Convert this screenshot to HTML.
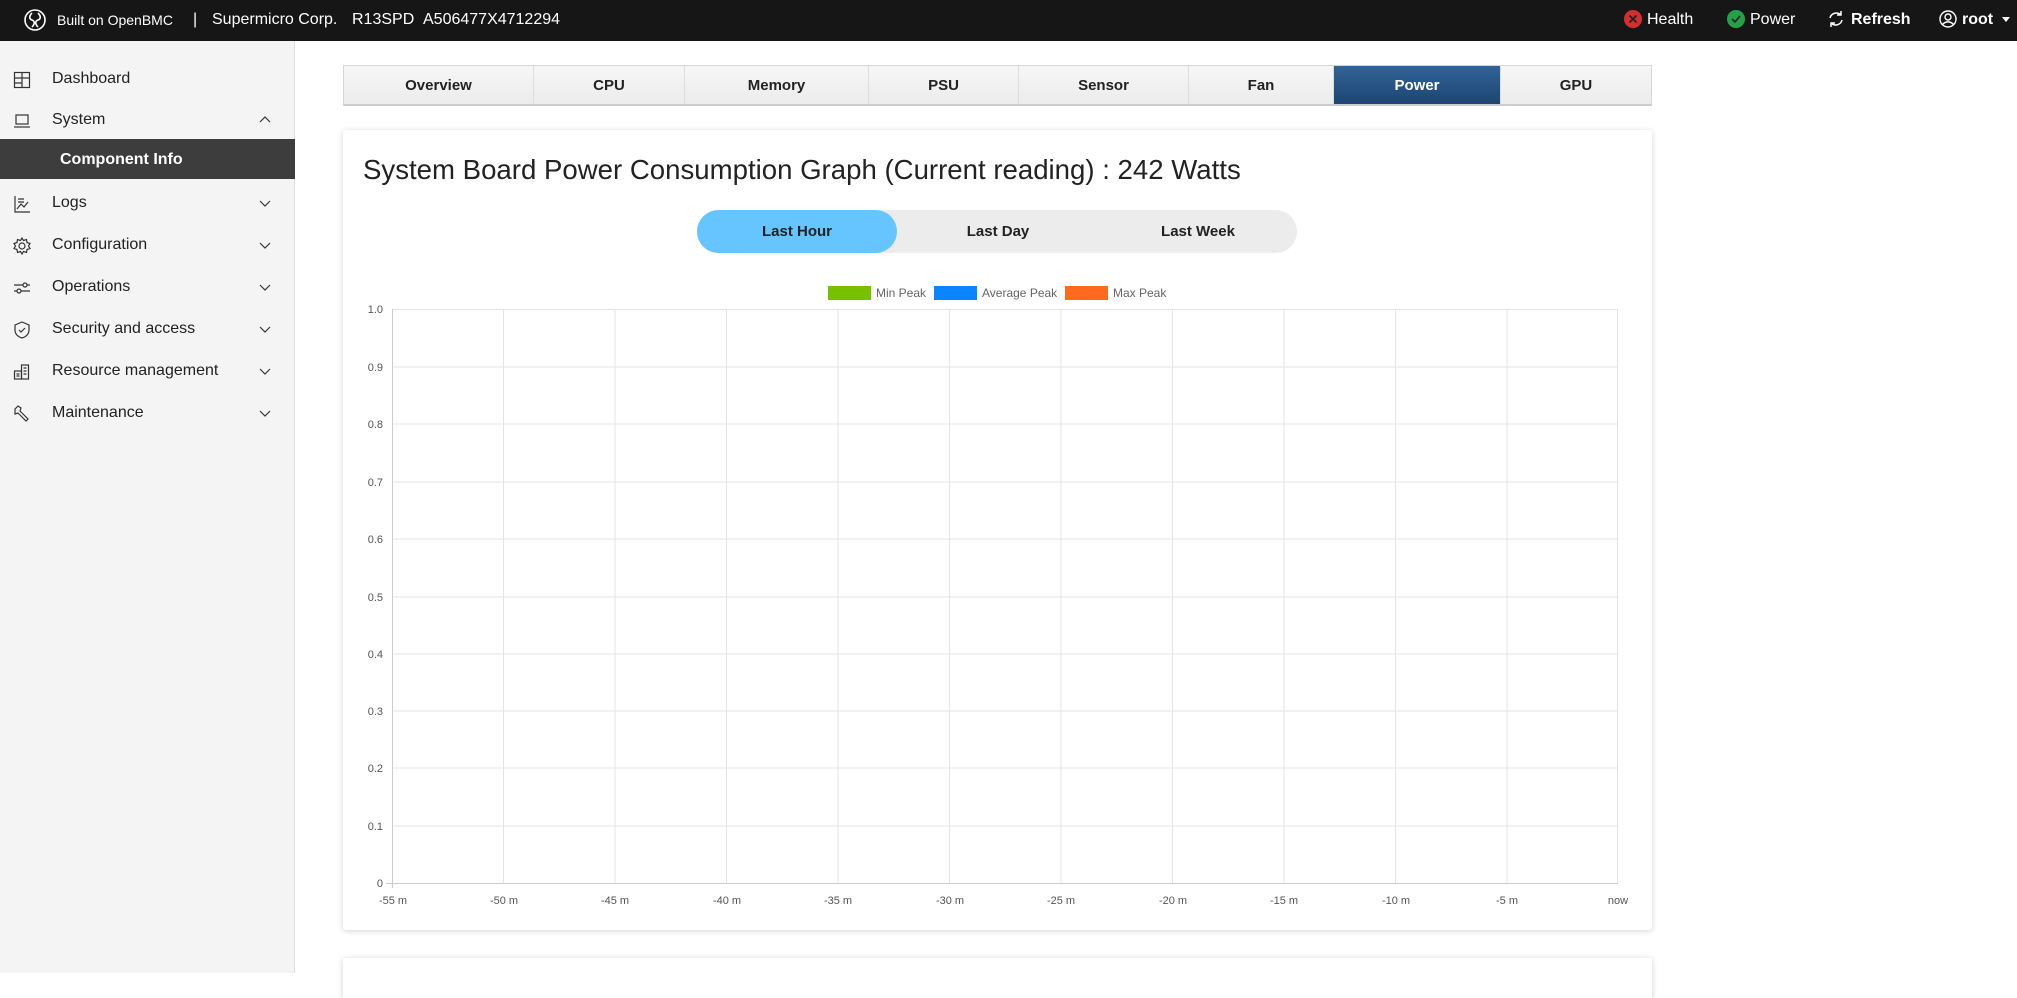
<!DOCTYPE html>
<html><head><meta charset="utf-8"><style>
*{box-sizing:border-box;margin:0;padding:0}
body{width:2017px;height:973px;overflow:hidden;font-family:"Liberation Sans",sans-serif;background:#fff;position:relative;color:#222}
.hdr{position:absolute;left:0;top:0;width:2017px;height:41px;background:#161616;color:#fff}
.hdr span{position:absolute;top:11px;font-size:16px;white-space:nowrap}
.side{position:absolute;left:0;top:41px;width:295px;height:932px;background:#f4f4f4;border-right:1px solid #ddd}
.nav{position:absolute;left:0;width:295px;height:40px;font-size:16px;color:#222}
.nav .t{position:absolute;left:52px;top:10px}
.nav svg.i{position:absolute;left:13px;top:11px}
.nav .c{position:absolute;left:258px;top:12px}
.tabs{position:absolute;left:343px;top:65px;height:41px;width:1309px;display:flex;border:1px solid #d6d6d6;border-bottom:2px solid #ccc}
.tabs div{height:100%;background:linear-gradient(#f6f6f6,#ececec);border-right:1px solid #ddd;font-weight:bold;font-size:15px;display:flex;align-items:center;justify-content:center}
.card{position:absolute;left:343px;top:130px;width:1309px;height:800px;background:#fff;box-shadow:0 1px 6px rgba(0,0,0,.18);border-radius:3px}
</style></head><body>
<div class="hdr">
<svg style="position:absolute;left:23px;top:8px" width="24" height="24" viewBox="0 0 24 24" fill="none" stroke="#fff" stroke-width="1.6"><circle cx="12" cy="12" r="10"/><path d="M9 5c-3 3-3 6 0 7s3 4 0 7M15 5c3 3 3 6 0 7s-3 4 0 7"/></svg>
<span style="left:57px;font-size:14px;top:12px">Built on OpenBMC</span>
<span style="left:193px">|</span>
<span style="left:212px">Supermicro Corp.</span>
<span style="left:352px">R13SPD</span>
<span style="left:423px">A506477X4712294</span>
<svg style="position:absolute;left:1624px;top:10px" width="18" height="18"><circle cx="9" cy="9" r="9" fill="#d32f2f"/><path d="M5.5 5.5l7 7M12.5 5.5l-7 7" stroke="#222" stroke-width="1.8"/></svg>
<span style="left:1647px">Health</span>
<svg style="position:absolute;left:1727px;top:10px" width="18" height="18"><circle cx="9" cy="9" r="9" fill="#24a148"/><path d="M5 9l3 3 5-6" stroke="#222" stroke-width="1.6" fill="none"/></svg>
<span style="left:1750px">Power</span>
<svg style="position:absolute;left:1827px;top:10px" width="18" height="18" fill="none" stroke="#fff" stroke-width="1.5"><path d="M3 8a6.5 6.5 0 0 1 11-3M15 10a6.5 6.5 0 0 1-11 3M14 1v4h-4M4 17v-4h4"/></svg>
<span style="left:1851px;font-weight:bold">Refresh</span>
<svg style="position:absolute;left:1939px;top:10px" width="18" height="18" fill="none" stroke="#fff" stroke-width="1.4"><circle cx="9" cy="9" r="8"/><circle cx="9" cy="7" r="3"/><path d="M3.5 14.5c3-3.5 8-3.5 11 0"/></svg>
<span style="left:1962px;font-weight:bold">root</span>
<svg style="position:absolute;left:2002px;top:17px" width="8" height="5"><path d="M0 0h8L4 5z" fill="#fff"/></svg>
</div>
<div class="side">
<div class="nav" style="top:19px"><svg class="i" width="18" height="18" fill="none" stroke="#333" stroke-width="1.2"><rect x="1.5" y="1.5" width="15" height="15"/><path d="M1.5 7h15M9 1.5v5.5M1.5 12h7M9 7v9.5"/></svg><span class="t">Dashboard</span></div>
<div class="nav" style="top:60px"><svg class="i" width="18" height="18" fill="none" stroke="#333" stroke-width="1.2"><rect x="3" y="3" width="12" height="9"/><path d="M1 15h16"/></svg><span class="t">System</span><svg class="c" width="14" height="14" fill="none" stroke="#333" stroke-width="1.2"><path d="M2 9l5-5 5 5"/></svg></div>
<div style="position:absolute;left:0;top:98px;width:295px;height:40px;background:#3d3d3d;color:#fff;font-weight:bold;font-size:16px;padding:12px 0 0 60px">Component Info</div>
<div class="nav" style="top:143px"><svg class="i" width="18" height="18" fill="none" stroke="#333" stroke-width="1.2"><path d="M2 1v16h15M5 4h6M5 7h6M4 14l4-5 3 3 4-5"/></svg><span class="t">Logs</span><svg class="c" width="14" height="14" fill="none" stroke="#333" stroke-width="1.2"><path d="M2 5l5 5 5-5"/></svg></div>
<div class="nav" style="top:185px"><svg class="i" width="18" height="18" fill="none" stroke="#333" stroke-width="1.2"><circle cx="9" cy="9" r="3"/><path d="M9 1l1.5 2.5 3-1 .5 3 3 1-1.5 2.5 1.5 2.5-3 1-.5 3-3-1L9 17l-1.5-2.5-3 1-.5-3-3-1L2.5 9 1 6.5l3-1 .5-3 3 1z"/></svg><span class="t">Configuration</span><svg class="c" width="14" height="14" fill="none" stroke="#333" stroke-width="1.2"><path d="M2 5l5 5 5-5"/></svg></div>
<div class="nav" style="top:227px"><svg class="i" width="18" height="18" fill="none" stroke="#333" stroke-width="1.2"><path d="M1 6h9M14 6h3M1 12h3M8 12h9"/><circle cx="12" cy="6" r="2"/><circle cx="6" cy="12" r="2"/></svg><span class="t">Operations</span><svg class="c" width="14" height="14" fill="none" stroke="#333" stroke-width="1.2"><path d="M2 5l5 5 5-5"/></svg></div>
<div class="nav" style="top:269px"><svg class="i" width="18" height="18" fill="none" stroke="#333" stroke-width="1.2"><path d="M9 1l7 3v5c0 4-3 7-7 8-4-1-7-4-7-8V4z"/><path d="M6 9l2 2 4-4"/></svg><span class="t">Security and access</span><svg class="c" width="14" height="14" fill="none" stroke="#333" stroke-width="1.2"><path d="M2 5l5 5 5-5"/></svg></div>
<div class="nav" style="top:311px"><svg class="i" width="18" height="18" fill="none" stroke="#333" stroke-width="1.2"><rect x="1.5" y="8" width="7" height="8"/><rect x="8.5" y="2" width="7" height="14"/><path d="M3.5 11h3M3.5 13h3M10.5 5h3M10.5 8h3M10.5 11h3"/></svg><span class="t">Resource management</span><svg class="c" width="14" height="14" fill="none" stroke="#333" stroke-width="1.2"><path d="M2 5l5 5 5-5"/></svg></div>
<div class="nav" style="top:353px"><svg class="i" width="18" height="18" fill="none" stroke="#333" stroke-width="1.2"><path d="M2 4l3-3 3 2-1 3 8 8-2 2-8-8-3 1z"/></svg><span class="t">Maintenance</span><svg class="c" width="14" height="14" fill="none" stroke="#333" stroke-width="1.2"><path d="M2 5l5 5 5-5"/></svg></div>
</div>
<div class="tabs">
<div style="width:190px">Overview</div><div style="width:151px">CPU</div><div style="width:184px">Memory</div><div style="width:150px">PSU</div><div style="width:170px">Sensor</div><div style="width:145px">Fan</div><div style="width:167px;background:linear-gradient(#2f6399,#1d4670);color:#fff">Power</div><div style="width:150px;border-right:none">GPU</div>
</div>
<div class="card">
<div style="position:absolute;left:20px;top:24px;font-size:27.6px;color:#222">System Board Power Consumption Graph (Current reading) : 242 Watts</div>
<div style="position:absolute;left:354px;top:80px;width:600px;height:43px;background:#ececec;border-radius:22px"></div>
<div style="position:absolute;left:354px;top:80px;width:200px;height:43px;background:#66c5ff;border-radius:22px"></div>
<div style="position:absolute;left:354px;top:93px;width:200px;text-align:center;font-weight:bold;font-size:15px">Last Hour</div>
<div style="position:absolute;left:555px;top:93px;width:200px;text-align:center;font-weight:bold;font-size:15px">Last Day</div>
<div style="position:absolute;left:755px;top:93px;width:200px;text-align:center;font-weight:bold;font-size:15px">Last Week</div>
</div>
<svg style="position:absolute;left:0;top:0" width="2017" height="973">
<rect x="828" y="286" width="43" height="14" fill="#76c000"/><text x="876" y="297" font-size="12" fill="#666" font-family="Liberation Sans">Min Peak</text>
<rect x="934" y="286" width="43" height="14" fill="#0a84ff"/><text x="982" y="297" font-size="12" fill="#666" font-family="Liberation Sans">Average Peak</text>
<rect x="1065" y="286" width="43" height="14" fill="#ff6a1f"/><text x="1113" y="297" font-size="12" fill="#666" font-family="Liberation Sans">Max Peak</text>
<g stroke="#e4e4e4" stroke-width="1">
<path d="M392 309.5H1618M392 367H1618M392 424H1618M392 482H1618M392 539H1618M392 597H1618M392 654H1618M392 711H1618M392 768H1618M392 826H1618"/>
<path d="M503.5 309V883M615 309V883M726.5 309V883M838 309V883M949.5 309V883M1061 309V883M1172.5 309V883M1284 309V883M1395.5 309V883M1507 309V883M1617.5 309V883"/>
</g>
<path d="M392.5 309V888M386 883.5H1618" stroke="#ccc"/>
<g font-size="11" fill="#555" font-family="Liberation Sans" text-anchor="end">
<text x="383" y="313">1.0</text><text x="383" y="371">0.9</text><text x="383" y="428">0.8</text><text x="383" y="486">0.7</text><text x="383" y="543">0.6</text><text x="383" y="601">0.5</text><text x="383" y="658">0.4</text><text x="383" y="715">0.3</text><text x="383" y="772">0.2</text><text x="383" y="830">0.1</text><text x="383" y="887">0</text>
</g>
<g font-size="11" fill="#555" font-family="Liberation Sans" text-anchor="middle">
<text x="393" y="904">-55 m</text><text x="504" y="904">-50 m</text><text x="615" y="904">-45 m</text><text x="727" y="904">-40 m</text><text x="838" y="904">-35 m</text><text x="950" y="904">-30 m</text><text x="1061" y="904">-25 m</text><text x="1173" y="904">-20 m</text><text x="1284" y="904">-15 m</text><text x="1396" y="904">-10 m</text><text x="1507" y="904">-5 m</text><text x="1618" y="904">now</text>
</g>
</svg>
<div style="position:absolute;left:343px;top:958px;width:1309px;height:40px;background:#fff;box-shadow:0 1px 6px rgba(0,0,0,.18)"></div>
</body></html>
